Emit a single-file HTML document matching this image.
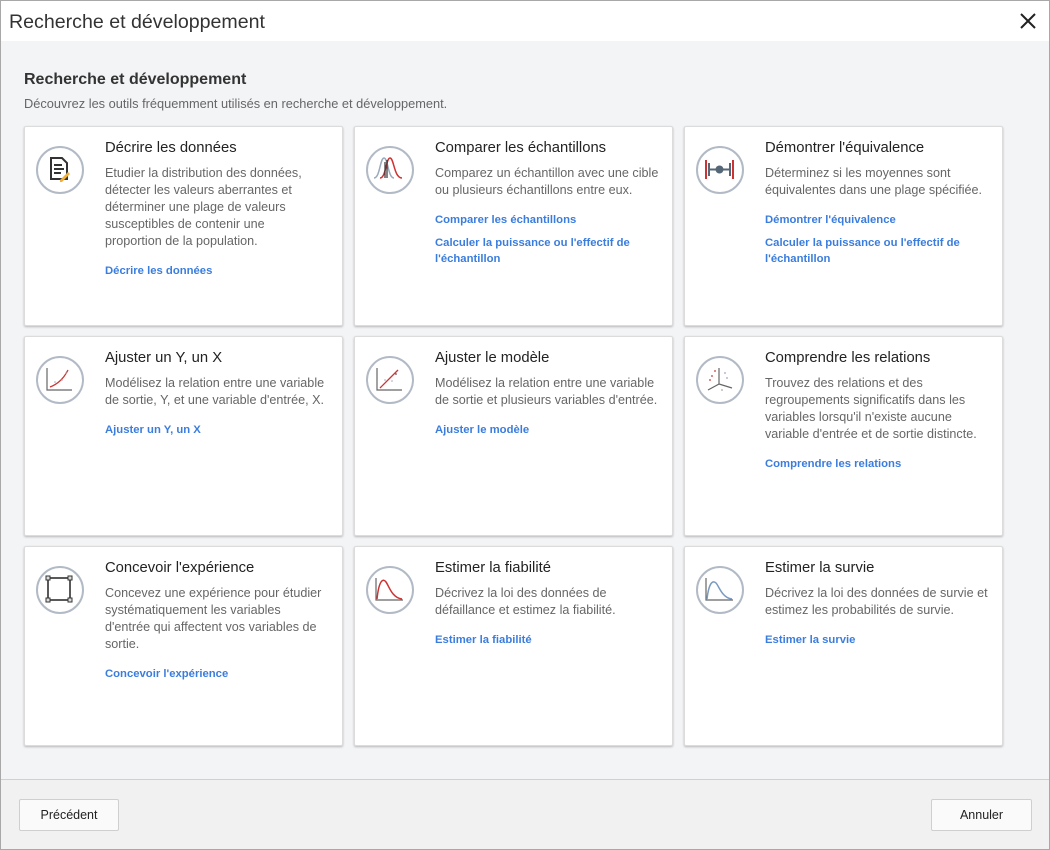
<!DOCTYPE html>
<html><head><meta charset="utf-8"><style>
*{box-sizing:border-box;margin:0;padding:0}
body{width:1050px;height:850px;font-family:"Liberation Sans",sans-serif;background:#fff;overflow:hidden;position:relative}
.win{position:absolute;left:0;top:0;width:1050px;height:850px;border:1px solid #a8a8a8}
.hdr{position:absolute;left:1px;top:1px;width:1048px;height:40px;background:#fff}
.hdr h1{position:absolute;left:8px;top:10px;font-size:19.6px;font-weight:normal;color:#333}
.x{position:absolute;left:1018px;top:11px}
.main{position:absolute;left:1px;top:41px;width:1048px;height:738px;background:#f3f4f6}
.foot{position:absolute;left:1px;top:779px;width:1048px;height:70px;background:#f1f1f1;border-top:1px solid #d0d0d0}
.btn{position:absolute;top:19px;height:32px;background:#fafafa;border:1px solid #cfcfcf;border-radius:2px;font-size:12.5px;color:#222;text-align:center;line-height:30px}
h2{position:absolute;left:23px;top:30px;font-size:16px;font-weight:bold;color:#333}
.sub{position:absolute;left:23px;top:55px;font-size:12.8px;color:#666}
.card{position:absolute;width:319px;height:200px;background:#fff;border:1px solid #dcdcdc;border-radius:2px;box-shadow:0 1px 2px rgba(0,0,0,.25)}
.ic{position:absolute;left:11px;top:19px;width:48px;height:48px;border:2.5px solid #b2bac6;border-radius:50%}
.ic svg{position:absolute;left:0;top:0}
.t{position:absolute;left:80px;top:13px;font-size:14.8px;color:#222;white-space:nowrap}
.d{position:absolute;left:80px;top:38px;font-size:12.6px;line-height:17px;color:#666;white-space:nowrap}
.l{display:block;font-size:11.3px;font-weight:bold;color:#3b7ddd;line-height:16px;margin-top:13px}
.l+.l{margin-top:7px}
</style></head><body>
<div class="win"></div>
<div class="hdr"><h1>Recherche et développement</h1>
<svg class="x" width="18" height="18" viewBox="0 0 18 18"><path d="M2 2L16 16M16 2L2 16" stroke="#222" stroke-width="2"/></svg></div>
<div class="main">
<h2>Recherche et développement</h2>
<div class="sub">Découvrez les outils fréquemment utilisés en recherche et développement.</div>

<div class="card" style="left:23px;top:85px"><div class="ic"><svg width="43" height="43" viewBox="0 0 43 43"><path d="M13 10h11l5 5v16H13z" fill="none" stroke="#333" stroke-width="2"/><path d="M16 17h8M16 21h10M16 25h7" stroke="#333" stroke-width="2"/><path d="M22 32l8-8 2 2-8 8h-2z" fill="#f0b040"/></svg></div>
<div class="t">Décrire les données</div>
<div class="d">Etudier la distribution des données,<br>détecter les valeurs aberrantes et<br>déterminer une plage de valeurs<br>susceptibles de contenir une<br>proportion de la population.<span class="l">Décrire les données</span></div></div>

<div class="card" style="left:353px;top:85px"><div class="ic"><svg width="43" height="43" viewBox="0 0 43 43"><path d="M6 30C12 30 12 10 16 10S20 30 26 30" fill="none" stroke="#9ab" stroke-width="1.5"/><path d="M12 30C18 30 18 10 22 10S26 30 34 30" fill="none" stroke="#c33" stroke-width="1.5"/><path d="M19 12v18M17 14v16" stroke="#333" stroke-width="1.2"/></svg></div>
<div class="t">Comparer les échantillons</div>
<div class="d">Comparez un échantillon avec une cible<br>ou plusieurs échantillons entre eux.<span class="l">Comparer les échantillons</span><span class="l">Calculer la puissance ou l'effectif de<br>l'échantillon</span></div></div>

<div class="card" style="left:683px;top:85px"><div class="ic"><svg width="43" height="43" viewBox="0 0 43 43"><path d="M8 12v19M35 12v19" stroke="#c33" stroke-width="2"/><path d="M11 15v13M32 15v13M11 21.5h21" stroke="#567" stroke-width="2"/><circle cx="21.5" cy="21.5" r="4" fill="#567"/></svg></div>
<div class="t">Démontrer l'équivalence</div>
<div class="d">Déterminez si les moyennes sont<br>équivalentes dans une plage spécifiée.<span class="l">Démontrer l'équivalence</span><span class="l">Calculer la puissance ou l'effectif de<br>l'échantillon</span></div></div>

<div class="card" style="left:23px;top:295px"><div class="ic"><svg width="43" height="43" viewBox="0 0 43 43"><path d="M9 10v22h25" fill="none" stroke="#666" stroke-width="1.2"/><path d="M12 29C20 26 26 20 30 12" fill="none" stroke="#c33" stroke-width="1.3"/><circle cx="17" cy="24" r=".8" fill="#9ab"/><circle cx="24" cy="22" r=".8" fill="#9ab"/><circle cx="28" cy="15" r=".8" fill="#9ab"/></svg></div>
<div class="t">Ajuster un Y, un X</div>
<div class="d">Modélisez la relation entre une variable<br>de sortie, Y, et une variable d'entrée, X.<span class="l">Ajuster un Y, un X</span></div></div>

<div class="card" style="left:353px;top:295px"><div class="ic"><svg width="43" height="43" viewBox="0 0 43 43"><path d="M9 10v22h25" fill="none" stroke="#666" stroke-width="1.2"/><path d="M12 30L30 12" stroke="#c33" stroke-width="1.3"/><circle cx="17" cy="22" r=".8" fill="#9ab"/><circle cx="24" cy="23" r=".8" fill="#9ab"/><circle cx="28" cy="16" r=".8" fill="#333"/></svg></div>
<div class="t">Ajuster le modèle</div>
<div class="d">Modélisez la relation entre une variable<br>de sortie et plusieurs variables d'entrée.<span class="l">Ajuster le modèle</span></div></div>

<div class="card" style="left:683px;top:295px"><div class="ic"><svg width="43" height="43" viewBox="0 0 43 43"><path d="M21 10v16L10 32M21 26l13 4" fill="none" stroke="#666" stroke-width="1.2"/><circle cx="14" cy="18" r=".9" fill="#c33"/><circle cx="17" cy="13" r=".9" fill="#c33"/><circle cx="12" cy="22" r=".9" fill="#c33"/><circle cx="27" cy="15" r=".9" fill="#9ab"/><circle cx="29" cy="20" r=".9" fill="#9ab"/><circle cx="24" cy="32" r=".9" fill="#aaa"/></svg></div>
<div class="t">Comprendre les relations</div>
<div class="d">Trouvez des relations et des<br>regroupements significatifs dans les<br>variables lorsqu'il n'existe aucune<br>variable d'entrée et de sortie distincte.<span class="l">Comprendre les relations</span></div></div>

<div class="card" style="left:23px;top:505px"><div class="ic"><svg width="43" height="43" viewBox="0 0 43 43"><rect x="10" y="10" width="22" height="22" fill="none" stroke="#222" stroke-width="1.5"/><g fill="#ddd" stroke="#333"><rect x="8" y="8" width="4" height="4"/><rect x="30" y="8" width="4" height="4"/><rect x="8" y="30" width="4" height="4"/><rect x="30" y="30" width="4" height="4"/></g></svg></div>
<div class="t">Concevoir l'expérience</div>
<div class="d">Concevez une expérience pour étudier<br>systématiquement les variables<br>d'entrée qui affectent vos variables de<br>sortie.<span class="l">Concevoir l'expérience</span></div></div>

<div class="card" style="left:353px;top:505px"><div class="ic"><svg width="43" height="43" viewBox="0 0 43 43"><path d="M8 10v22h27" fill="none" stroke="#666" stroke-width="1.2"/><path d="M9 31C11 12 15 10 18 14S24 30 34 31" fill="none" stroke="#c33" stroke-width="1.5"/></svg></div>
<div class="t">Estimer la fiabilité</div>
<div class="d">Décrivez la loi des données de<br>défaillance et estimez la fiabilité.<span class="l">Estimer la fiabilité</span></div></div>

<div class="card" style="left:683px;top:505px"><div class="ic"><svg width="43" height="43" viewBox="0 0 43 43"><path d="M8 10v22h27" fill="none" stroke="#666" stroke-width="1.2"/><path d="M9 31C11 14 15 12 18 15S24 30 34 31" fill="none" stroke="#7a9ac0" stroke-width="1.5"/></svg></div>
<div class="t">Estimer la survie</div>
<div class="d">Décrivez la loi des données de survie et<br>estimez les probabilités de survie.<span class="l">Estimer la survie</span></div></div>
</div>
<div class="foot">
<div class="btn" style="left:18px;width:100px">Précédent</div>
<div class="btn" style="left:930px;width:101px">Annuler</div>
</div>
</body></html>
